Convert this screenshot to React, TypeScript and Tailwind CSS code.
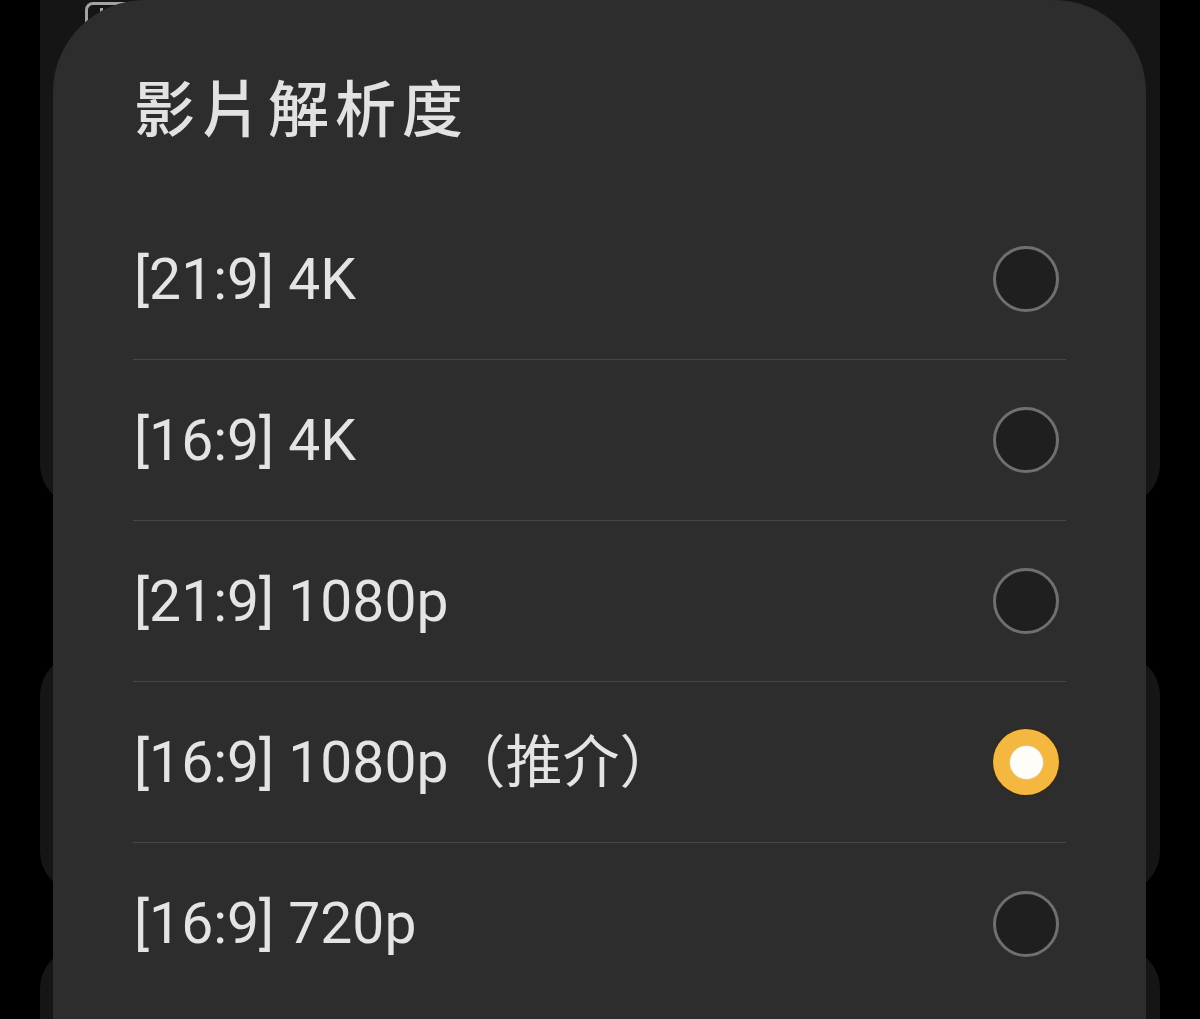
import React from "react";

const rows = [
  { label: "[21:9] 4K", selected: false },
  { label: "[16:9] 4K", selected: false },
  { label: "[21:9] 1080p", selected: false },
  { label: "[16:9] 1080p（推介）", selected: true },
  { label: "[16:9] 720p", selected: false },
];

function Radio({ selected }: { selected: boolean }) {
  if (selected) {
    return (
      <div className="mr-[7px] flex h-[66px] w-[66px] items-center justify-center rounded-full bg-[#f4b73f] shadow-[0_0_0_1px_#3a2a0a]">
        <div className="h-[33px] w-[33px] rounded-full bg-[#fffdf8] shadow-[0_0_0_1px_#e9c27a]" />
      </div>
    );
  }
  return <div className="mr-[7px] h-[66px] w-[66px] rounded-full border-[3px] border-[#6f6f6f] bg-[#1f1f1f]" />;
}

export default function App() {
  return (
    <div
      className="flex h-[1019px] w-full justify-center overflow-hidden bg-black"
      style={{ fontFamily: "Roboto, 'Noto Sans CJK TC', 'Noto Sans', sans-serif" }}
    >
      <div className="relative w-[1120px]">
        <div className="flex h-full flex-col">
          <div className="relative h-[505px] rounded-b-[40px] bg-[#151515]">
            <div className="absolute left-[45px] top-[2px] h-[44px] w-[60px] rounded-[8px] border-[3px] border-[#a3a3a3]">
              <div className="ml-[12px] mt-[3px] h-[10px] w-[3px] bg-[#a3a3a3]" />
            </div>
          </div>
          <div className="mt-[150px] h-[237px] rounded-[40px] bg-[#151515]" />
          <div className="mt-[56px] flex-1 rounded-t-[40px] bg-[#151515]" />
        </div>

        <div className="absolute left-[13px] top-0 h-[1100px] w-[1093px] rounded-t-[92px] bg-[#2d2d2d] px-[80px]">
          <div className="h-[199px] pl-[1px] pt-[75px]">
            <div
              className="text-[61px] font-medium leading-[62px] tracking-[6px] text-[#e2e2e2]"
              style={{ fontFamily: "'Noto Sans CJK TC', sans-serif" }}
            >
              影片解析度
            </div>
          </div>
          {rows.map((r, i) => (
            <div
              key={i}
              className={
                i < rows.length - 1
                  ? "flex h-[161px] items-center justify-between border-b border-[#474747]"
                  : "flex h-[161px] items-center justify-between"
              }
            >
              <span className="pl-[1px] text-[57px] leading-none text-[#e4e4e4]">{r.label}</span>
              <Radio selected={r.selected} />
            </div>
          ))}
        </div>
      </div>
    </div>
  );
}
